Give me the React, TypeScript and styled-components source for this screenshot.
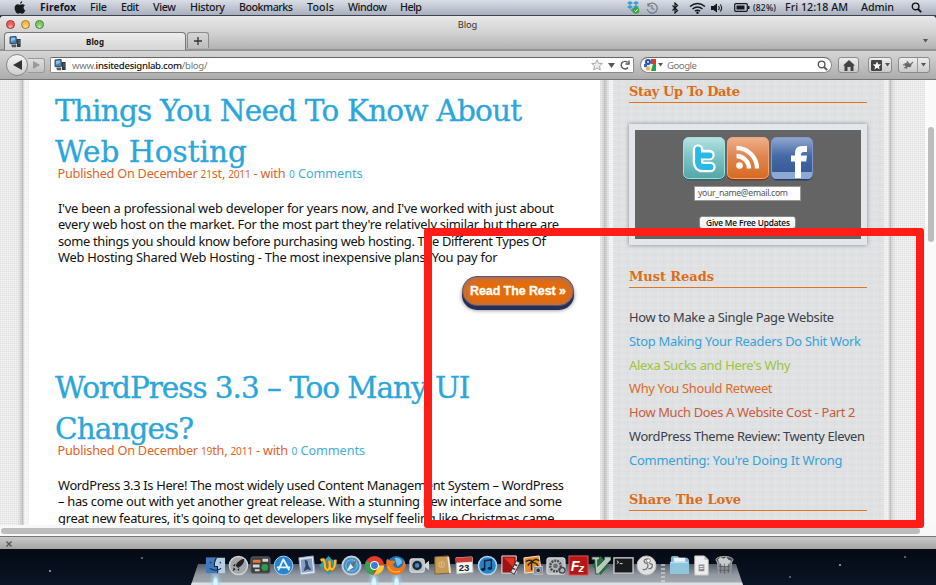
import React, { useLayoutEffect, useRef, useState } from "react";
import styled, { createGlobalStyle, css } from "styled-components";

const sans = `"Noto Sans", "Open Sans", sans-serif`;
const slab = `"DejaVu Serif", serif`;

const Global = createGlobalStyle`
  * { box-sizing: border-box; }
  html, body { margin: 0; padding: 0; overflow: hidden; }
  body { font-family: ${sans}; color: #111; }
  h1, h2, p, ul { margin: 0; padding: 0; font-weight: inherit; }
  svg { display: block; flex: none; }
`;

/* Text set to an exact measure by tracking */
const Measure = styled.span<{ $w: number }>`
  display: block;
  flex: none;
  width: ${(p) => p.$w}px;
  white-space: nowrap;
`;
function Line({ w, children }: { w: number; children: React.ReactNode }) {
  const ref = useRef<HTMLSpanElement>(null);
  const [tracking, setTracking] = useState(0);
  useLayoutEffect(() => {
    const el = ref.current;
    if (!el) return;
    el.style.letterSpacing = "0px";
    const natural = el.getBoundingClientRect().width;
    const count = (el.textContent || "").length;
    const next = (w - natural) / Math.max(1, count - 1);
    el.style.letterSpacing = `${next}px`;
    setTracking(next);
  }, [w]);
  return (
    <Measure $w={w}>
      <span ref={ref} style={{ letterSpacing: tracking }}>{children}</span>
    </Measure>
  );
}

const Screen = styled.div`
  position: relative;
  width: 936px;
  height: 585px;
  overflow: hidden;
  display: flex;
  flex-direction: column;
  background: #060b16;
`;

/* ---------- menu bar ---------- */
const MenuBar = styled.header`
  flex: none;
  height: 16px;
  display: flex;
  align-items: center;
  background: linear-gradient(#d9dde6, #bcc2ce 60%, #a9afbc);
  border-bottom: 1px solid #3e444f;
  font-size: 10.7px;
  line-height: 15px;
  font-weight: 500;
  color: #15171c;
`;
const Slot = styled.div<{ $gap: number; $bold?: boolean; $small?: boolean }>`
  margin-left: ${(p) => p.$gap}px;
  ${(p) => p.$bold && css`font-weight: 700; font-size: 10.3px;`}
  ${(p) => p.$small && css`font-size: 8.5px;`}
`;
const menus: [string, number, number][] = [
  ["File", 14, 17], ["Edit", 14, 18], ["View", 14, 23], ["History", 14, 35],
  ["Bookmarks", 14, 54], ["Tools", 14, 27], ["Window", 14, 39], ["Help", 13, 22],
];

/* ---------- browser chrome ---------- */
const TitleArea = styled.div`
  flex: none;
  height: 35px;
  display: flex;
  flex-direction: column;
  background: linear-gradient(#e9e9e9, #cfcfcf 55%, #b3b3b3);
  border-bottom: 2px solid #929292;
  border-top-left-radius: 3px;
  border-top-right-radius: 3px;
`;
const TitleRow = styled.div`
  height: 17px;
  display: flex;
  align-items: center;
  padding-left: 6px;
  font-size: 9.3px;
  color: #333;
`;
const Light = styled.i<{ $c: string; $e: string }>`
  width: 9px;
  height: 9px;
  margin-right: 5.6px;
  border-radius: 50%;
  background: radial-gradient(circle at 50% 85%, #fff9, transparent 45%), ${(p) => p.$c};
  border: 1px solid ${(p) => p.$e};
`;
const WindowTitle = styled.div`
  margin-left: 408px;
`;
const Tabs = styled.div`
  flex: none;
  height: 17px;
  display: flex;
  padding-left: 4px;
`;
const Tab = styled.div`
  width: 182px;
  height: 18px;
  display: flex;
  align-items: center;
  padding-left: 4px;
  gap: 65px;
  background: linear-gradient(#ededed, #d5d5d5);
  border: 1px solid #777;
  border-bottom: 0;
  border-radius: 4px 4px 0 0;
  font-size: 8px;
  font-weight: 700;
`;
const NewTab = styled.div`
  width: 22px;
  height: 16px;
  margin-left: 1px;
  display: grid;
  place-items: center;
  border: 1px solid #8c8c8c;
  border-bottom: 0;
  border-radius: 3px 3px 0 0;
  background: linear-gradient(#d6d6d6, #bdbdbd);
`;
const TabMenu = styled.div`
  margin: 7px 8px 0 auto;
`;
const Toolbar = styled.nav`
  flex: none;
  height: 29px;
  display: flex;
  align-items: center;
  background: linear-gradient(#d6d6d6, #acacac);
  border-bottom: 1px solid #757575;
  padding-left: 6px;
  font-size: 9.6px;
`;
const Back = styled.div`
  width: 22px;
  height: 22px;
  border-radius: 50%;
  border: 1px solid #888;
  display: grid;
  place-items: center;
  background: linear-gradient(#f5f5f5, #cfcfcf);
`;
const Forward = styled.div`
  width: 17px;
  height: 15px;
  display: grid;
  place-items: center;
  border: 1px solid #999;
  border-left: 0;
  border-radius: 0 3px 3px 0;
  background: linear-gradient(#dedede, #c2c2c2);
`;
const Field = styled.div<{ $w: number; $gap: number; $round?: boolean }>`
  width: ${(p) => p.$w}px;
  height: 16px;
  margin-left: ${(p) => p.$gap}px;
  display: flex;
  align-items: center;
  background: #fff;
  border: 1px solid #8a8a8a;
  border-top-color: #666;
  border-radius: ${(p) => (p.$round ? 8 : 2)}px;
  padding-left: 3px;
  color: #777;
  line-height: 13px;
`;
const Strong = styled.span`
  color: #111;
  font-weight: 500;
`;
const FieldEnd = styled.div`
  display: flex;
  align-items: center;
  gap: 5px;
  margin-left: auto;
  margin-right: 3px;
`;
const ToolButton = styled.div<{ $w: number; $gap: number }>`
  width: ${(p) => p.$w}px;
  height: 16px;
  margin-left: ${(p) => p.$gap}px;
  display: flex;
  align-items: center;
  justify-content: center;
  gap: 3px;
  border: 1px solid #8b8b8b;
  border-radius: 3px;
  background: linear-gradient(#eee, #cacaca);
`;
const ButtonRule = styled.i`
  width: 1px;
  height: 14px;
  background: #999;
`;

/* ---------- web page ---------- */
const Viewport = styled.div`
  flex: none;
  height: 445px;
  display: flex;
  overflow: hidden;
  background:
    repeating-linear-gradient(0deg, #ffffff77 0 1px, transparent 1px 2px),
    repeating-linear-gradient(90deg, #dfdfdf 0 1px, #eaeaea 1px 2px);
`;
const Main = styled.main`
  flex: none;
  width: 571px;
  background: #fff;
  padding-left: 26px;
`;
const LeftEdge = styled.div`
  flex: none;
  width: 29px;
  background: linear-gradient(90deg, transparent 17px, #0001 20px, #0003 23px, #fff4 24px, #fff8 26px, #fff4);
`;
const Gutter = styled.div`
  flex: none;
  width: 13px;
  background: linear-gradient(90deg, #0000, #0000000c 2px, #0000002b 5px, #0000000a 8px, #fff6 10px);
`;
const Article = styled.article<{ $top: number }>`
  height: 277px;
  padding-top: ${(p) => p.$top}px;
`;
const Headline = styled.h1`
  font: 400 29.5px/41px ${slab};
  color: #2ba6da;
  height: 82px;
  -webkit-text-stroke: 0.35px #2ba6da;
`;
const Byline = styled.div`
  display: flex;
  gap: 3.5px;
  margin-top: -9px;
  padding-left: 2.5px;
  font-size: 12.7px;
  line-height: 18px;
  color: #dc6428;
`;
const CommentLink = styled.a`
  color: #45aedb;
`;
const Num = styled.span`
  font-size: 0.8em;
`;
const Excerpt = styled.div`
  margin-top: 17px;
  padding-left: 3px;
  font-size: 12.9px;
  line-height: 16.25px;
  color: #111;
`;
const ReadMore = styled.a`
  display: flex;
  width: 112px;
  height: 30px;
  margin: 11px 0 0 407px;
  padding: 7px 0 0 7px;
  border-radius: 15px;
  border: 1px solid #5b5573;
  background: #e66b09;
  box-shadow: inset 0 1px 7px #8d7284, 0 4px 0 #24305a, 0 4px 4px #0008;
  font: 700 12.5px/15px "Liberation Sans", Arial, sans-serif;
  color: #fff;
  -webkit-text-stroke: 0.3px #fff;
`;

const Sidebar = styled.aside`
  flex: none;
  width: 271px;
  padding-left: 16px;
  padding-top: 2px;
  background:
    repeating-linear-gradient(90deg, #ffffff1c 0 1px, transparent 1px 5px, #b8bec414 5px 6px, transparent 6px 9px),
    repeating-linear-gradient(0deg, #ffffff18 0 1px, transparent 1px 4px, #b8bec414 4px 5px, transparent 5px 7px),
    #dfe1e3;
`;
const RightEdge = styled.div`
  flex: none;
  width: 41px;
  background: linear-gradient(90deg, #fff3 4px, #0000000c 5px, #0003 6px, #0001 8px, transparent 12px);
`;
const SideTitle = styled.h2<{ $gap?: number }>`
  width: 238px;
  height: 21px;
  margin-top: ${(p) => p.$gap ?? 0}px;
  border-bottom: 1.5px solid #e07420;
  font: 700 13px/19px ${slab};
  color: #dd6c15;
`;
const Signup = styled.form`
  width: 238px;
  height: 121px;
  margin-top: 21px;
  padding: 6px;
  background: #e3e6ea;
  box-shadow: 0 0 4px #0006;
`;
const SignupBody = styled.div`
  height: 109px;
  display: flex;
  flex-direction: column;
  align-items: center;
  background: #646464;
  padding-top: 7px;
`;
const Socials = styled.div`
  display: flex;
  gap: 2px;
`;
const EmailField = styled.div`
  width: 107px;
  height: 15px;
  margin: 5px 0 0;
  padding-left: 3px;
  background: #fff;
  border: 1px solid #999;
  font-size: 8.7px;
  line-height: 12px;
  color: #555;
  margin-right: 1px;
`;
const SubmitButton = styled.div`
  width: 97px;
  height: 13px;
  margin: 14.5px 1px 0 0;
  padding-left: 6px;
  border-radius: 3px;
  background: linear-gradient(#fff, #ececec);
  border: 1px solid #888;
  font-size: 8.3px;
  line-height: 11px;
  font-weight: 500;
  color: #000;
`;
const Links = styled.ul`
  margin-top: 18px;
  list-style: none;
  font-size: 12.9px;
  line-height: 23.75px;
`;
const LinkItem = styled.li<{ $c: string }>`
  color: ${(p) => p.$c};
`;
const Scroller = styled.div`
  flex: none;
  width: 11px;
  padding: 47px 0 0 3px;
  background: #fafafa;
`;
const ScrollThumb = styled.div<{ $w: number; $h: number }>`
  width: ${(p) => p.$w}px;
  height: ${(p) => p.$h}px;
  border-radius: 4px;
  background: #bdbdbd;
`;
const HScroller = styled.div`
  flex: none;
  height: 11px;
  padding: 3px 0 0 1px;
  background: #f8f8f8;
`;
const StatusBar = styled.footer`
  flex: none;
  height: 13px;
  padding: 4px 0 0 6px;
  border-top: 1px solid #777;
  background: linear-gradient(#c9c9c9, #a4a4a4);
`;

/* Highlight drawn over the screen */
const Highlight = styled.div`
  position: absolute;
  left: 424px;
  top: 228px;
  width: 499.5px;
  height: 300px;
  border: 8px solid #fe1e17;
  border-radius: 3px;
`;

/* ---------- dock ---------- */
const Desktop = styled.div`
  flex: 1;
  display: flex;
  justify-content: center;
  background:
    radial-gradient(circle at 50px 22px, #8fa4c8 0 0.6px, transparent 1.2px),
    radial-gradient(circle at 142px 9px, #7085aa 0 0.5px, transparent 1.2px),
    radial-gradient(circle at 840px 16px, #8fa4c8 0 0.6px, transparent 1.2px),
    radial-gradient(circle at 790px 28px, #6a7da4 0 0.5px, transparent 1.2px),
    radial-gradient(circle at 905px 8px, #7085aa 0 0.5px, transparent 1.2px),
    linear-gradient(#050a14, #0a1424);
`;
const Shelf = styled.div`
  width: 552px;
  height: 36px;
  display: flex;
  padding: 6px 0 0 13px;
  margin-left: -2px;
  background:
    linear-gradient(#0000 33px, #dde1e6 34px),
    linear-gradient(#0000 15px, #555d68 15px, #949aa2 26px, #a3a8ae 33px);
  clip-path: polygon(7px 0, 545px 0, 545px 15px, 552px 36px, 0 36px, 7px 15px);
`;
const DockItem = styled.div<{ $open?: boolean }>`
  width: 22.68px;
  flex: none;
  display: flex;
  flex-direction: column;
  align-items: center;
  ${(p) => p.$open && css`
    background: radial-gradient(ellipse at 50% 28px, #dff6ff 0 1.5px, #9bdcff88 3px, transparent 6px);
  `}
`;
const Divider = styled.div`
  width: 10.5px;
  margin: 9px 0 0;
  height: 18px;
  background: repeating-linear-gradient(#ddd9 0 2px, transparent 2px 4px) center / 4px 100% no-repeat;
`;

const Glyph = ({ s, w, h, vb, children }: { s?: number; w?: number; h?: number; vb: string; children: React.ReactNode }) => (
  <svg width={w ?? s} height={h ?? s} viewBox={vb} fill="none">{children}</svg>
);

const Caret = () => <Glyph w={5} h={4} vb="0 0 5 4"><path d="M0 0h5L2.5 3.5z" fill="#555" /></Glyph>;
const Magnifier = ({ c = "#111" }) => (
  <Glyph s={11} vb="0 0 11 11"><circle cx="4.6" cy="4.4" r="3.3" stroke={c} strokeWidth="1.4" /><path d="M7 7l3.2 3.2" stroke={c} strokeWidth="1.8" /></Glyph>
);
const SiteIcon = () => (
  <Glyph w={12} h={12} vb="0 0 12 12">
    <path d="M1 1l6-.7.8 7L1 7.6z" fill="#4a86ba" stroke="#26425e" strokeWidth=".9" />
    <path d="M2 2l4-.4.2 2.2L2 5.5z" fill="#8dc0e6" />
    <path d="M8 3h3.6v8H8z" fill="#343a40" /><path d="M2.2 8.4h5v2.8H3z" fill="#54595f" /><path d="M9 5h2M9 7h2" stroke="#8d949c" strokeWidth=".6" />
  </Glyph>
);

const Twitter = () => (
  <Glyph w={42} h={44} vb="0 0 42 44">
    <defs><linearGradient id="tw" x2="0" y2="1"><stop stopColor="#b8e3e2" /><stop offset=".45" stopColor="#7cc5c6" /><stop offset="1" stopColor="#54a5a9" /></linearGradient></defs>
    <rect x=".5" y="2" width="41" height="41.5" rx="5" fill="#2d6668" /><rect x=".5" y=".5" width="41" height="41" rx="5" fill="url(#tw)" stroke="#a5dcdc" />
    <path d="M15 12.500v12.500q0 5 5 5h7.500M15 18h11.500" stroke="#fff" strokeWidth="10.500" strokeLinecap="round" strokeLinejoin="round" />
    <path d="M15 12.500v12.500q0 5 5 5h7.500M15 18.500h11.500" stroke="#28b9e8" strokeWidth="5.800" strokeLinecap="round" strokeLinejoin="round" />
  </Glyph>
);
const Rss = () => (
  <Glyph w={42} h={44} vb="0 0 42 44">
    <defs><linearGradient id="rs" x2="0" y2="1"><stop stopColor="#efb08c" /><stop offset=".45" stopColor="#df8651" /><stop offset="1" stopColor="#d96a20" /></linearGradient></defs>
    <rect x=".5" y="2" width="41" height="41.500" rx="5" fill="#7e3a12" /><rect x=".5" y=".5" width="41" height="41" rx="5" fill="url(#rs)" stroke="#eba67c" />
    <circle cx="12.500" cy="28.500" r="3.300" fill="#fff" /><path d="M9.500 19A12.500 12.500 0 0 1 22 31.500M9.500 11A20.500 20.500 0 0 1 30 31.500" stroke="#fff" strokeWidth="4.300" />
  </Glyph>
);
const Facebook = () => (
  <Glyph w={42} h={44} vb="0 0 42 44">
    <defs><linearGradient id="fb" x2="0" y2="1"><stop stopColor="#91a7d0" /><stop offset=".45" stopColor="#4669a8" /><stop offset="1" stopColor="#32538f" /></linearGradient></defs>
    <rect x=".5" y="2" width="41" height="41.500" rx="5" fill="#253d68" /><rect x=".5" y=".5" width="41" height="41" rx="5" fill="url(#fb)" stroke="#8099c5" />
    <path d="M1 35h40v3q0 4-4 4H5q-4 0-4-4z" fill="#8da8d3" />
    <path d="M24 41V24.500h-4V18.500h4V16q0-7 7-7h5v6h-3.500q-2.500 0-2.500 2.500v1h6l-.8 6H30V41z" fill="#fff" />
  </Glyph>
);

const dock: { open?: boolean; art: React.ReactNode }[] = [
  { open: true, art: <><path d="M1 3h20v16H1z" fill="#b7cde4" /><path d="M1 3h11q-3 5-2 9h3q-1 4 0 7H1z" fill="#4078bd" /><path d="M12 3q-3 5-2 9h3l.3 7M5 14q6 4 12 0M6 7v2M16 7v2" stroke="#132641" strokeWidth="1.200" /></> },
  { art: <><circle cx="11" cy="11" r="9.500" fill="#a3a6a8" stroke="#d0d2d3" strokeWidth="1.500" /><path d="M17 4q-6 1-9 7l2.500 2.500Q17 11 17 4zM8 9l-3 2 2 1zM12 14l-1 3-1-2zM6 13l-1 4 3-2z" fill="#222" /></> },
  { art: <><rect x="1" y="2" width="20" height="17" rx="2" fill="#3b3e40" stroke="#666" /><path d="M3 5h8v3H3z" fill="#e37b37" /><path d="M3 10h7v3H3zM5 15h5v2H5zM13 4h6v3h-6z" fill="#d4d5d5" /><circle cx="15.500" cy="13" r="3.500" fill="#2f9c48" /></> },
  { art: <><circle cx="11" cy="11" r="9.800" fill="#2583d4" stroke="#a9d4f2" /><path d="M11 4l-5.500 12M10.500 4L17 16M4 13h14" stroke="#e7f4ff" strokeWidth="2" /></> },
  { art: <><path d="M3 3l15-2 2 18-15 2z" fill="#e1e6ec" stroke="#9aa8b8" /><path d="M5 5l11.500-1.500L18 17 6 18.500z" fill="#809fcb" /><path d="M9 5l3 1 1 5 3 5-4-1-4 2 2-6z" fill="#38465b" /></> },
  { art: <><path d="M11 1l10 10-10 10L1 11z" fill="#2fa1b5" /><path d="M3 6q4-3 4 3t3 7q3-1 2-10M12 6q0 10 3 9t3-10" stroke="#925d10" strokeWidth="4" /><path d="M3 6q4-3 4 3t3 7q3-1 2-10M12 6q0 10 3 9t3-10" stroke="#f4b936" strokeWidth="2.500" /></> },
  { art: <><circle cx="11" cy="11" r="9.500" fill="#3e8ec4" stroke="#c7ced3" strokeWidth="2" /><circle cx="11" cy="11" r="6" stroke="#8bc5e6" /><path d="M17 5l-4 8-7 4 4-8z" fill="#eee" /><path d="M17 5l-4 8-3-4z" fill="#5b6d7c" /></> },
  { open: true, art: <><circle cx="11" cy="11" r="10" fill="#e23c2d" /><path d="M11 11L2.500 6A10 10 0 0 0 10 21z" fill="#35a34a" /><path d="M11 11h10A10 10 0 0 1 10 21l5-8z" fill="#f7cf31" /><circle cx="11" cy="11" r="4.700" fill="#fff" /><circle cx="11" cy="11" r="3.600" fill="#377fd5" /></> },
  { open: true, art: <><circle cx="11" cy="10.500" r="9.500" fill="#286fad" /><path d="M9 3q7-1 8 5l-5 4z" fill="#6fc1e4" /><path d="M2 4q1 2 3 2 3-1 5 1l-3 3q2 5 8 3 4-2 3-8 4 4 2 9-3 7-10 7T1 13 2 4z" fill="#e9761d" /><path d="M2 12q4 8 13 5" stroke="#f8ad34" strokeWidth="1.500" /></> },
  { art: <><rect x="1" y="4" width="15" height="14" rx="2" fill="#b8bec3" stroke="#eceeef" /><circle cx="8.500" cy="11" r="5" fill="#1a2b3d" /><circle cx="8.500" cy="11" r="2.300" fill="#5289b4" /><path d="M16 10l5-4v10l-5-4z" fill="#d2d6d8" /></> },
  { art: <><path d="M3 2l14-1 2 18-16 1z" fill="#c69b58" stroke="#806238" /><path d="M17 2l2 17" stroke="#efe6d2" strokeWidth="2" /><circle cx="10" cy="10" r="3" stroke="#e4c28b" /><path d="M10 8v4" stroke="#e4c28b" /></> },
  { art: <><path d="M2 3l17-1 1 16-17 2z" fill="#f5f5f5" stroke="#bbb" /><path d="M2 3l17-1v5L2 8z" fill="#cc3b32" /><text x="5" y="17" fontFamily="Liberation Sans" fontSize="10" fontWeight="700" fill="#222">23</text></> },
  { art: <><circle cx="11" cy="11" r="9.500" fill="#2285c9" stroke="#b6d8ee" strokeWidth="1.500" /><path d="M8 15V6l7-1v9" stroke="#14243b" strokeWidth="1.600" /><ellipse cx="6.500" cy="15" rx="2.200" ry="1.700" fill="#14243b" /><ellipse cx="13.500" cy="14" rx="2.200" ry="1.700" fill="#14243b" /></> },
  { art: <><path d="M2 1h15v18H2z" fill="#9e1313" stroke="#eee" /><path d="M4 3h11v11z" fill="#df3020" /><path d="M17 6l4 2-6 12-4-2z" fill="#ddd" stroke="#333" /><path d="M15 10l3 1M13 14l3 1" stroke="#333" strokeWidth="1.500" /></> },
  { art: <><path d="M2 3l16-2 2 16-17 2z" fill="#e78c2b" stroke="#f4efe2" /><path d="M10 5v11M4 7q4-3 7 0 3-4 7-1M6 11q4-5 6-3 3 0 5 4" stroke="#26221b" strokeWidth="1.500" /><rect x="12" y="12" width="10" height="8" rx="1" fill="#828b92" stroke="#ccd" /><circle cx="17" cy="16" r="2.500" fill="#343b42" stroke="#bbc" /></> },
  { art: <><rect x="2" y="3" width="19" height="17" rx="2" fill="#b6b9bc" stroke="#ececec" /><circle cx="11" cy="11.500" r="5.500" stroke="#45484c" strokeWidth="2.500" strokeDasharray="2 1" /><circle cx="11" cy="11.500" r="2.500" fill="#696e72" /><circle cx="18" cy="16" r="3" stroke="#45484c" strokeWidth="1.500" /></> },
  { art: <><rect x="1" y="1" width="20" height="20" fill="#b61616" stroke="#e35858" /><text x="3" y="17" fontFamily="Liberation Sans" fontSize="15" fontStyle="italic" fontWeight="700" fill="#fff">F</text><text x="11" y="18" fontFamily="Liberation Sans" fontSize="12" fontStyle="italic" fontWeight="700" fill="#fff">z</text></> },
  { art: <><path d="M11 1l9 10-9 10L2 11z" fill="#22743b" /><path d="M2 2h8v3H8v7l7-7V2h7v3L9 20H6L5 5H2z" fill="#b9c7bf" stroke="#274634" strokeWidth=".8" /></> },
  { art: <><rect x="1" y="3" width="20" height="16" fill="#181b1e" stroke="#c2c5c7" strokeWidth="1.500" /><path d="M4 6l2 1.500L4 9M7 9h3" stroke="#ddd" /></> },
  { art: <><circle cx="11" cy="11" r="10" fill="#e1e1e1" stroke="#bbb" /><path d="M13 4q-6 0-4 4 5 1 3 5-1 3-5 2M14 9q4 0 3 3t-4 2" stroke="#6f7377" strokeWidth="1.300" /><circle cx="13" cy="6" r="2" fill="#fff" stroke="#777" /></> },
];
const shelfEnd: React.ReactNode[] = [
  <><path d="M2 3q0-2 2-2h5l2 2h8l2 2v14H2z" fill="#78b4d1" /><path d="M5 3h12v7H5z" fill="#e9f4fa" /><path d="M1 7h20v13H1z" fill="#91c5dd" /><path d="M2 8h18" stroke="#c2e4f2" /></>,
  <><path d="M4 1h10l4 4v16H4z" fill="#eee" stroke="#ccc" /><path d="M14 1v4h4" fill="#bbb" /><path d="M8 10h6v7H8z" fill="#8a8f93" /><path d="M9 12h4M9 14h4" stroke="#eee" /></>,
  <><path d="M3 5h16l-2 15H5z" fill="#858b91" stroke="#9da2a6" /><ellipse cx="11" cy="5" rx="9" ry="3.500" fill="#4b5056" stroke="#aab0b4" /><path d="M4 5l3-3 3 2 3-2 2 3 3 1-4 6-6-1z" fill="#c9cccd" /><path d="M7 9v10M11 9v11M15 9v10M5 12h12M5 16h12" stroke="#4e5459" strokeWidth=".7" /></>,
];

const reads: [string, string, number][] = [
  ["How to Make a Single Page Website", "#3b3f4a", 205],
  ["Stop Making Your Readers Do Shit Work", "#36a1d8", 232],
  ["Alexa Sucks and Here's Why", "#9bc43c", 161.5],
  ["Why You Should Retweet", "#dc6a2a", 143.5],
  ["How Much Does A Website Cost - Part 2", "#c95a3c", 226.500],
  ["WordPress Theme Review: Twenty Eleven", "#3b3f4a", 236],
  ["Commenting: You're Doing It Wrong", "#36a1d8", 213.500],
];

function Post({ top, title, date, dateW, body }: {
  top: number; title: [string, number][]; date: React.ReactNode; dateW: number; body: [string, number][];
}) {
  return (
    <Article $top={top}>
      <Headline>{title.map(([t, w]) => <Line key={t} w={w}>{t}</Line>)}</Headline>
      <Byline>
        <Line w={dateW}>{date}</Line>
        <CommentLink><Line w={73.5}><Num>0</Num> Comments</Line></CommentLink>
      </Byline>
      <Excerpt>{body.map(([t, w]) => <Line key={t} w={w}>{t}</Line>)}</Excerpt>
      {body.length > 3 && <ReadMore><Line w={96}>Read The Rest »</Line></ReadMore>}
    </Article>
  );
}

export default function App() {
  return (
    <Screen>
      <Global />
      <MenuBar>
        <Slot $gap={14}>
          <Glyph w={12} h={13} vb="0 0 12 13"><path d="M8.300 0Q6 .5 6 3 8.300 2.600 8.300 0zM6 3.700Q4 2.700 2.500 3.500 0 5 .8 8.500 2 12.500 3.800 12.700q1 0 2.200-.6 1.200.6 2.300.6Q10 12.300 11.300 9.500 9.500 8.500 9.500 6.700T11 4.200Q9.200 2.500 6 3.700z" fill="#17191d" /></Glyph>
        </Slot>
        <Slot $gap={14} $bold><Line w={36}>Firefox</Line></Slot>
        {menus.map(([t, g, w]) => <Slot key={t} $gap={g}><Line w={w}>{t}</Line></Slot>)}
        <Slot $gap={204}>
          <Glyph w={14} h={13} vb="0 0 14 13"><path d="M4 0l3 2-3 2-3-2zM10 0l3 2-3 2-3-2zM4 4l3 2-3 2-3-2zM10 4l3 2-3 2-3-2zM7 7l3 2-3 2-3-2z" fill="#3c9bd0" /><circle cx="10" cy="9.500" r="3.300" fill="#38a52f" /><path d="M8.500 9.500l1.200 1.200 2-2.500" stroke="#fff" /></Glyph>
        </Slot>
        <Slot $gap={6}>
          <Glyph s={12} vb="0 0 12 12"><path d="M2 3.500a5 5 0 1 1-.7 3.500M2 1v3h3M6 3v3.500l2.500 1" stroke="#747a86" strokeWidth="1.200" /></Glyph>
        </Slot>
        <Slot $gap={13}>
          <Glyph w={8} h={12} vb="0 0 8 12"><path d="M1.500 3.500l5 5L4 11V1l2.500 2.500-5 5" stroke="#16181c" strokeWidth="1.200" /></Glyph>
        </Slot>
        <Slot $gap={10}>
          <Glyph w={17} h={12} vb="0 0 17 12"><path d="M1 4.500q7.500-6 15 0M3.500 7q5-4 10 0M6 9.200q2.500-2 5 0" stroke="#16181c" strokeWidth="1.600" /><circle cx="8.500" cy="10.700" r="1.200" fill="#16181c" /></Glyph>
        </Slot>
        <Slot $gap={5}>
          <Glyph w={12} h={10} vb="0 0 12 10"><path d="M0 3h2.500L6 .5v9L2.500 7H0z" fill="#16181c" /><path d="M7.500 3q1.500 2 0 4M9.300 1.500q2.700 3.500 0 7" stroke="#16181c" strokeWidth="1.100" /></Glyph>
        </Slot>
        <Slot $gap={11}>
          <Glyph w={16} h={9} vb="0 0 16 9"><rect x=".7" y=".7" width="12.600" height="7.600" rx="1" stroke="#16181c" strokeWidth="1.200" /><path d="M2.500 2.500h8v4h-8zM14 3h1.500v3H14z" fill="#16181c" /></Glyph>
        </Slot>
        <Slot $gap={3} $small><Line w={23}>(82%)</Line></Slot>
        <Slot $gap={9}><Line w={63}>Fri 12:18 AM</Line></Slot>
        <Slot $gap={13}><Line w={33}>Admin</Line></Slot>
        <Slot $gap={17}><Magnifier /></Slot>
      </MenuBar>

      <TitleArea>
        <TitleRow>
          <Light $c="#ee5c58" $e="#9c3a39" /><Light $c="#f3bb4e" $e="#a8772c" /><Light $c="#79c76a" $e="#45863c" />
          <WindowTitle><Line w={19.5}>Blog</Line></WindowTitle>
        </TitleRow>
        <Tabs>
          <Tab><SiteIcon /><Line w={18}>Blog</Line></Tab>
          <NewTab><Glyph s={8} vb="0 0 8 8"><path d="M4 0v8M0 4h8" stroke="#333" strokeWidth="1.300" /></Glyph></NewTab>
          <TabMenu><Caret /></TabMenu>
        </Tabs>
      </TitleArea>
      <Toolbar>
        <Back><Glyph w={9} h={10} vb="0 0 9 10"><path d="M9 0v10L0 5z" fill="#333" /></Glyph></Back>
        <Forward><Glyph w={7} h={8} vb="0 0 7 8"><path d="M0 0v8l7-4z" fill="#999" /></Glyph></Forward>
        <Field $w={584} $gap={5}>
          <SiteIcon />
          <Slot $gap={6}><Line w={135.5}>www.<Strong>insitedesignlab.com</Strong>/blog/</Line></Slot>
          <FieldEnd>
            <Glyph s={12} vb="0 0 12 12"><path d="M6 .8l1.500 3.500 3.800.3-2.900 2.500.9 3.800L6 8.900l-3.300 2 .9-3.800L.7 4.600l3.800-.3z" fill="#eee" stroke="#aaa" /></Glyph>
            <Glyph w={7} h={5} vb="0 0 7 5"><path d="M0 0h7L3.500 5z" fill="#555" /></Glyph>
            <Glyph s={10} vb="0 0 10 10"><path d="M8 7.500A3.800 3.800 0 1 1 7.700 2.500M9 .5V4H5.500" stroke="#555" strokeWidth="1.400" /></Glyph>
          </FieldEnd>
        </Field>
        <Field $w={192} $gap={6} $round>
          <Glyph s={12} vb="0 0 12 12"><path d="M0 0h12v12H0z" fill="#e9eef8" /><path d="M7 0h5v5H7z" fill="#dc3b2b" /><path d="M9 5h3v7H7z" fill="#2e9e48" /><circle cx="4" cy="3" r="2" stroke="#2452b5" strokeWidth="2" /><path d="M0 5h3v3H0z" fill="#3667c8" /><circle cx="4" cy="9.500" r="2" fill="#edb82e" /></Glyph>
          <Slot $gap={2}><Caret /></Slot>
          <Slot $gap={4}><Line w={30}>Google</Line></Slot>
          <FieldEnd><Magnifier c="#555" /></FieldEnd>
        </Field>
        <ToolButton $w={21} $gap={6}>
          <Glyph w={12} h={11} vb="0 0 12 11"><path d="M6 0l6 5.500h-1.500V11h-3V7h-3v4h-3V5.500H0z" fill="#444" /></Glyph>
        </ToolButton>
        <ToolButton $w={24} $gap={9}>
          <Glyph s={11} vb="0 0 11 11"><rect width="11" height="11" rx="1" fill="#444" /><path d="M6 1.500l1.200 2.700 3 .2-2.300 2 .7 3L6 7.800 3.400 9.400l.7-3-2.300-2 3-.2z" fill="#fff" /></Glyph><Caret />
        </ToolButton>
        <ToolButton $w={32} $gap={6}>
          <Glyph w={12} h={10} vb="0 0 12 10"><path d="M1 5l4-2 3 2 3-3M2 8l4-2 3 1M5 1l2 3M4 9l3-5" stroke="#777" strokeWidth="1.200" /><ellipse cx="6" cy="5" rx="3.500" ry="1.800" fill="#666" /></Glyph><ButtonRule /><Caret />
        </ToolButton>
      </Toolbar>

      <Viewport>
        <LeftEdge />
        <Main>
          <Post
            top={11}
            title={[["Things You Need To Know About", 467], ["Web Hosting", 192]]}
            date={<>Published On December <Num>21</Num>st, <Num>2011</Num> - with</>}
            dateW={228}
            body={[
              ["I've been a professional web developer for years now, and I've worked with just about", 496],
              ["every web host on the market. For the most part they're relatively similar, but there are", 501],
              ["some things you should know before purchasing web hosting. The Different Types Of", 488],
              ["Web Hosting Shared Web Hosting - The most inexpensive plans. You pay for", 439.500],
            ]}
          />
          <Post
            top={11}
            title={[["WordPress 3.3 – Too Many UI", 415.500], ["Changes?", 139]]}
            date={<>Published On December <Num>19</Num>th, <Num>2011</Num> - with</>}
            dateW={230.500}
            body={[
              ["WordPress 3.3 Is Here! The most widely used Content Management System – WordPress", 506],
              ["– has come out with yet another great release. With a stunning new interface and some", 504],
              ["great new features, it's going to get developers like myself feeling like Christmas came", 496.500],
            ]}
          />
        </Main>
        <Gutter />
        <Sidebar>
          <SideTitle><Line w={111}>Stay Up To Date</Line></SideTitle>
          <Signup>
            <SignupBody>
              <Socials><Twitter /><Rss /><Facebook /></Socials>
              <EmailField><Line w={90}>your_name@email.com</Line></EmailField>
              <SubmitButton><Line w={84}>Give Me Free Updates</Line></SubmitButton>
            </SignupBody>
          </Signup>
          <SideTitle $gap={22}><Line w={85}>Must Reads</Line></SideTitle>
          <Links>
            {reads.map(([t, c, w]) => <LinkItem key={t} $c={c}><Line w={w}>{t}</Line></LinkItem>)}
          </Links>
          <SideTitle $gap={18}><Line w={112}>Share The Love</Line></SideTitle>
        </Sidebar>
        <RightEdge />
        <Scroller><ScrollThumb $w={6} $h={115} /></Scroller>
      </Viewport>
      <HScroller><ScrollThumb $w={919} $h={6} /></HScroller>
      <StatusBar><Glyph s={6} vb="0 0 6 6"><path d="M.5.5l5 5M5.500.5l-5 5" stroke="#555" strokeWidth="1.400" /></Glyph></StatusBar>
      <Desktop>
        <Shelf>
          {dock.map((d, i) => <DockItem key={i} $open={d.open}><Glyph s={21} vb="0 0 22 22">{d.art}</Glyph></DockItem>)}
          <Divider />
          {shelfEnd.map((art, i) => <DockItem key={i}><Glyph s={21} vb="0 0 22 22">{art}</Glyph></DockItem>)}
        </Shelf>
      </Desktop>
      <Highlight />
    </Screen>
  );
}
